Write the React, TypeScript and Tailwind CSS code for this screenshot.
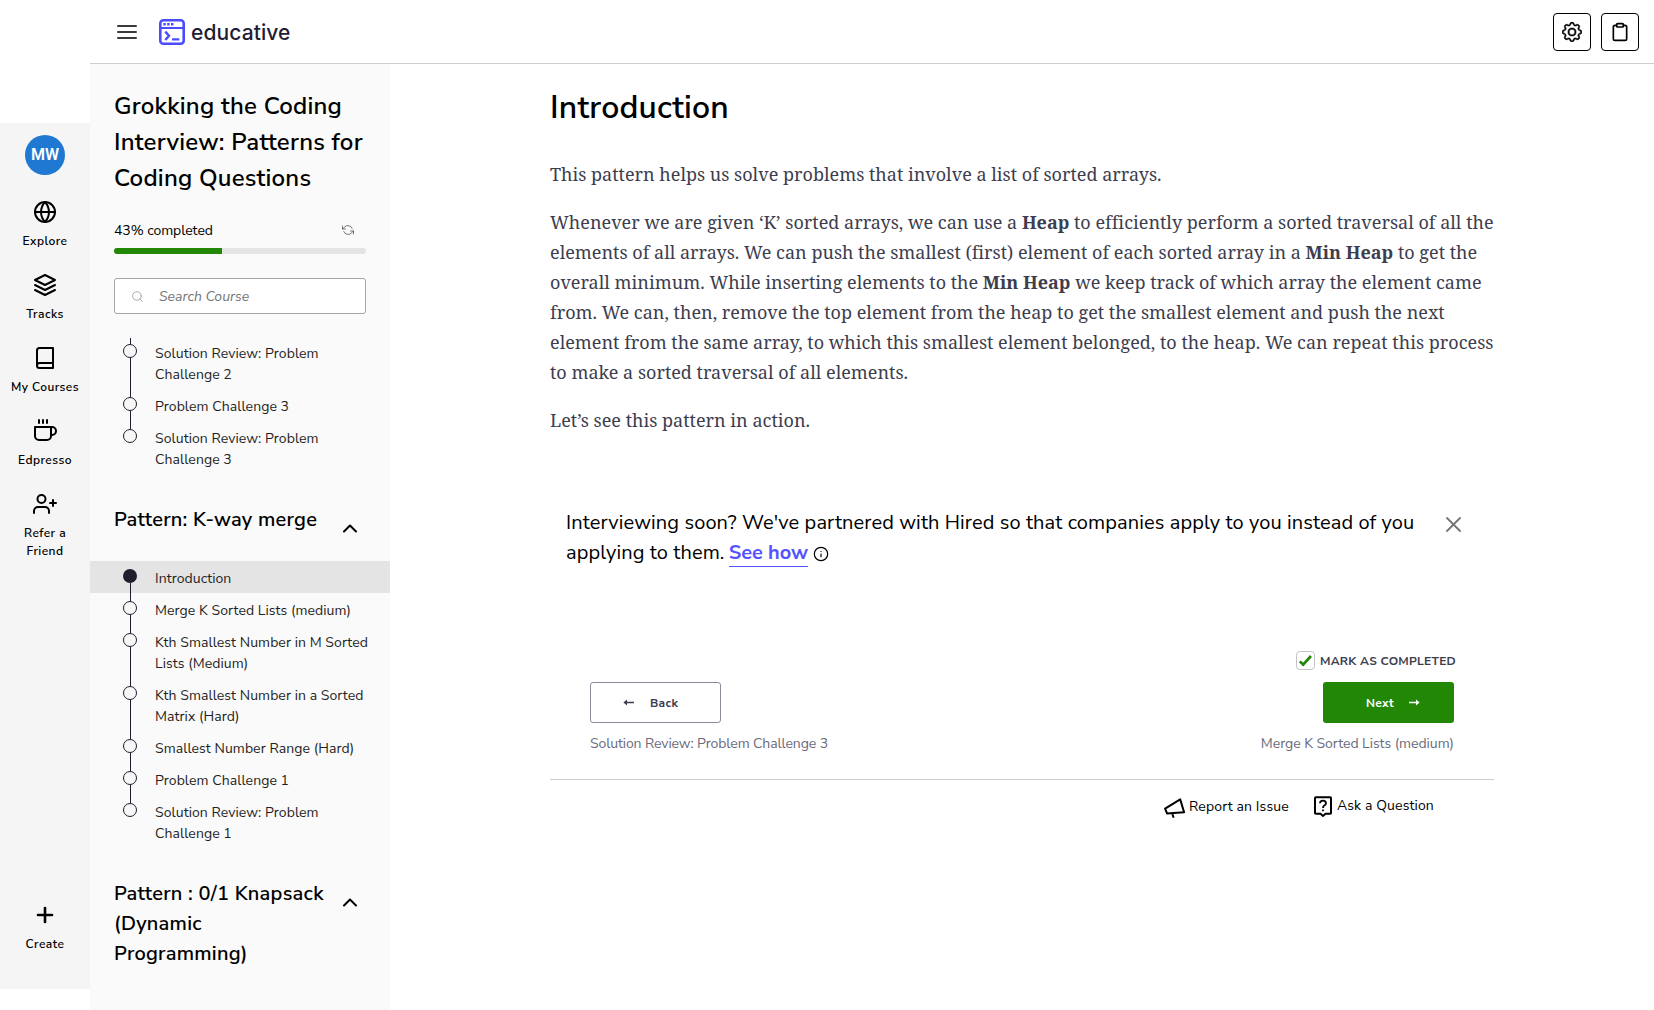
import type { ReactNode } from "react";
import { Clipboard } from "lucide-react";
import { BsGear } from "react-icons/bs";
import { FiBook, FiCoffee, FiGlobe, FiInfo, FiLayers, FiPlus, FiRefreshCw, FiSearch, FiUserPlus } from "react-icons/fi";

const railItems = [
  { label: "Explore", icon: <FiGlobe size={24} /> },
  { label: "Tracks", icon: <FiLayers size={24} /> },
  { label: "My Courses", icon: <FiBook size={24} /> },
  { label: "Edpresso", icon: <FiCoffee size={24} /> },
  { label: "Refer a Friend", icon: <FiUserPlus size={24} /> },
];

const previousLessons = ["Solution Review: Problem Challenge 2", "Problem Challenge 3", "Solution Review: Problem Challenge 3"];

const kWayLessons = [
  "Introduction",
  "Merge K Sorted Lists (medium)",
  "Kth Smallest Number in M Sorted Lists (Medium)",
  "Kth Smallest Number in a Sorted Matrix (Hard)",
  "Smallest Number Range (Hard)",
  "Problem Challenge 1",
  "Solution Review: Problem Challenge 1",
];

function RailItem({ icon, label }: { icon: ReactNode; label: string }) {
  return (
    <div className="flex flex-col items-center gap-2">
      {icon}
      <span className="w-[74px] text-center text-[12px] leading-[18px] font-semibold tracking-[0.45px]">{label}</span>
    </div>
  );
}

function Lesson({ title, active, lineAbove, lineBelow }: { title: string; active?: boolean; lineAbove: boolean; lineBelow: boolean }) {
  return (
    <li className={active ? "flex bg-[#e4e4e4] pl-[33px]" : "flex pl-[33px]"}>
      <div className="flex w-[14px] flex-col items-center">
        <span className={lineAbove ? "ml-px h-2 w-px bg-[#1f1d2e]" : "h-2 w-px"} />
        <span className={active ? "size-[14px] shrink-0 rounded-full bg-[#1f1d2e]" : "size-[14px] shrink-0 rounded-full border border-[#1f1d2e] bg-[#f7f7f8]"} />
        <span className={lineBelow ? "ml-px w-px flex-1 bg-[#1f1d2e]" : "w-px flex-1"} />
      </div>
      <span className="ml-[18px] w-[222px] pt-[7px] pb-1 text-[14px] leading-[21px] tracking-[0.07px] text-[#1f1f24]">{title}</span>
    </li>
  );
}

function LessonList({ lessons, activeIndex, continued }: { lessons: string[]; activeIndex?: number; continued?: boolean }) {
  return (
    <ul>
      {lessons.map((title, i) => (
        <Lesson key={title} title={title} active={i === activeIndex} lineAbove={continued || i > 0} lineBelow={i < lessons.length - 1} />
      ))}
    </ul>
  );
}

function SectionHeading({ title }: { title: string }) {
  return (
    <div className="flex items-start justify-between pt-[31px] pr-[33px] pl-6">
      <h3 className="w-[216px] text-[20px] leading-[30px] font-semibold tracking-[0.24px]">{title}</h3>
      <svg className="mt-[19px]" width="14" height="9" viewBox="0 0 14 9" fill="none" stroke="currentColor" strokeWidth="2" strokeLinecap="round" strokeLinejoin="round">
        <path d="M1 7.5L7 1.5L13 7.5" />
      </svg>
    </div>
  );
}

function Logo() {
  return (
    <svg width="26" height="26" viewBox="0 0 26 26" fill="none" stroke="#4c4cff" strokeWidth="2.6">
      <rect x="1.3" y="1.3" width="23.4" height="23.4" rx="3" />
      <path d="M1 9H25" strokeWidth="2" />
      <path d="M4.4 5.3H6.8M8.2 5.3H10.6M12 5.3H14.4" />
      <path d="M6.3 12.6L10 16.8L6.3 21M13 20.4H20.3" strokeWidth="2.4" />
    </svg>
  );
}

function Arrow({ flip }: { flip?: boolean }) {
  return (
    <svg className={flip ? "rotate-180" : ""} width="11" height="7" viewBox="0 0 11 7">
      <path d="M0 2.8H7V0.4L10.6 3.5L7 6.6V4.2H0Z" fill="currentColor" />
    </svg>
  );
}

export default function App() {
  return (
    <div className="flex h-[1010px] w-[1654px] overflow-hidden bg-white font-['Nunito_Sans','Nunito',sans-serif] text-black">
      <aside className="mt-[123px] flex h-[866px] w-[90px] shrink-0 flex-col items-center bg-[#f5f5f5] pt-3 pb-9">
        <div className="mb-[25px] flex size-10 items-center justify-center rounded-full bg-[#1f78d1] font-['Roboto',sans-serif] text-[16px] font-semibold text-white">MW</div>
        <nav className="flex flex-col gap-[23px]">
          {railItems.map((item) => (
            <RailItem key={item.label} icon={item.icon} label={item.label} />
          ))}
        </nav>
        <div className="mt-auto">
          <RailItem icon={<FiPlus size={24} strokeWidth={2.6} />} label="Create" />
        </div>
      </aside>

      <div className="flex min-w-0 flex-1 flex-col">
        <header className="flex h-16 shrink-0 items-center border-b border-[#cfcfcf] pr-[15px] pl-[27px]">
          <div className="flex w-5 flex-col gap-1">
            <span className="h-[2px] rounded bg-[#3b3b3b]" />
            <span className="h-[2px] rounded bg-[#3b3b3b]" />
            <span className="h-[2px] rounded bg-[#3b3b3b]" />
          </div>
          <div className="ml-[22px] flex items-center gap-[6px]">
            <Logo />
            <span className="pt-[2px] font-['Inter',sans-serif] text-[21px] leading-[26px] font-medium tracking-[0.1px] text-[#1f1d33]">educative</span>
          </div>
          <div className="ml-auto flex gap-[10px]">
            <button className="flex size-[38px] items-center justify-center rounded border border-black"><BsGear size={20} stroke="currentColor" strokeWidth={0.4} /></button>
            <button className="flex size-[38px] items-center justify-center rounded border border-black"><Clipboard size={20} /></button>
          </div>
        </header>

        <div className="flex min-h-0 flex-1">
          <section className="flex w-[300px] shrink-0 flex-col bg-[#fafafa]">
            <div className="px-6 pt-6">
              <h2 className="text-[24px] leading-9 font-semibold tracking-[0.23px]">Grokking the Coding Interview: Patterns for Coding Questions</h2>
              <div className="mt-6 flex items-center justify-between pr-3 text-[14px] leading-[21px]">
                <span className="tracking-[-0.06px]">43% completed</span>
                <FiRefreshCw size={12} strokeWidth={1.4} className="-mt-[2px] -scale-x-100 text-[#444]" />
              </div>
              <div className="mt-[7px] h-[6px] overflow-hidden rounded-[3px] bg-[#e4e4e4]">
                <div className="h-full w-[43%] bg-[#218705]" />
              </div>
              <div className="mt-6 flex h-9 items-center rounded-[3px] border border-[#a5a6ae] bg-white pl-4">
                <FiSearch size={13} strokeWidth={1.5} className="text-[#999]" />
                <span className="ml-[15px] text-[14px] text-[#757575] italic">Search Course</span>
              </div>
            </div>
            <div className="mt-6 min-h-0 flex-1 overflow-hidden">
              <div className="-mt-[2px]">
                <LessonList lessons={previousLessons} continued />
                <SectionHeading title="Pattern: K-way merge" />
                <div className="mt-[26px]">
                  <LessonList lessons={kWayLessons} activeIndex={0} />
                </div>
                <SectionHeading title="Pattern : 0/1 Knapsack (Dynamic Programming)" />
              </div>
            </div>
          </section>

          <main className="ml-40 w-[944px]">
            <h1 className="mt-5 text-[32px] leading-[48px] font-semibold tracking-[0.2px]">Introduction</h1>
            <article className="mt-[27px] flex flex-col gap-[18px] font-['Noto_Serif',serif] text-[18px] leading-[30px] tracking-[0.005px] text-[#3d3d4e]">
              <p>This pattern helps us solve problems that involve a list of sorted arrays.</p>
              <p>
                Whenever we are given ‘K’ sorted arrays, we can use a <b>Heap</b> to efficiently perform a sorted traversal of all the elements of all arrays. We can push the smallest (first) element of each sorted array in a <b>Min Heap</b> to get the overall minimum. While inserting elements to the <b>Min Heap</b> we keep track of which array the element came from. We can, then, remove the top element from the heap to get the smallest element and push the next element from the same array, to which this smallest element belonged, to the heap. We can repeat this process to make a sorted traversal of all elements.
              </p>
              <p>Let’s see this pattern in action.</p>
            </article>

            <div className="mt-[73px] flex items-start justify-between pr-[33px] pl-4">
              <p className="w-[860px] text-[20px] leading-[30px] tracking-[0.115px]">
                Interviewing soon? We've partnered with Hired so that companies apply to you instead of you applying to them.{" "}
                <a className="-ml-px border-b border-[#5553ff] font-bold tracking-[-0.1px] text-[#5553ff]">See how</a>
                <FiInfo size={16} strokeWidth={1.8} className="ml-[5px] inline-block align-[-3px]" />
              </p>
              <svg className="mt-[9px]" width="15" height="15" viewBox="0 0 15 15" stroke="#757575" strokeWidth="1.8" strokeLinecap="round">
                <path d="M1 1L14 14M14 1L1 14" />
              </svg>
            </div>

            <div className="mt-[83px] flex items-end justify-between pr-10 pl-10">
              <div>
                <button className="flex h-[41px] w-[131px] items-center rounded-[3px] border border-[#8b8b9b] pl-8 text-[#3d3d4e]">
                  <Arrow flip />
                  <span className="ml-4 text-[12px] font-bold tracking-[0.3px]">Back</span>
                </button>
                <p className="mt-[10px] text-[14px] leading-[21px] tracking-[-0.1px] text-[#6a6a7c]">Solution Review: Problem Challenge 3</p>
              </div>
              <div className="flex flex-col items-end">
                <div className="-mr-[2px] flex items-center gap-[5px]">
                  <span className="flex size-[19px] items-center justify-center rounded border border-[#c4c4c4]">
                    <svg width="13" height="12" viewBox="0 0 13 12" fill="none" stroke="#218705" strokeWidth="2.8">
                      <path d="M0.8 6.4L4.2 9.6L12 1" />
                    </svg>
                  </span>
                  <span className="text-[12px] leading-[18px] font-bold tracking-[0.26px] text-[#3d3d4e]">MARK AS COMPLETED</span>
                </div>
                <button className="mt-3 flex h-[41px] w-[131px] items-center rounded-[3px] bg-[#218705] pl-[43px] text-white">
                  <span className="text-[12px] font-bold tracking-[0.3px]">Next</span>
                  <span className="ml-[15px]"><Arrow /></span>
                </button>
                <p className="mt-[10px] text-[14px] leading-[21px] tracking-[-0.03px] text-[#6a6a7c]">Merge K Sorted Lists (medium)</p>
              </div>
            </div>

            <div className="mt-[25px] flex items-start border-t border-[#cfcfcf] pt-[15px] pl-[614px] text-[14px] leading-[21px] tracking-[0.14px]">
              <svg className="mt-[3px]" width="22" height="21" viewBox="0 0 22 21" fill="none" stroke="currentColor" strokeWidth="2" strokeLinejoin="round">
                <path d="M1.1 10.7L16.2 1.4L20.1 14.2L3 15.4ZM8.2 15.2L9.6 19.8" />
              </svg>
              <span className="mt-px ml-[3px]">Report an Issue</span>
              <svg className="mt-px ml-[25px]" width="18" height="22" viewBox="0 0 18 22" fill="none" stroke="currentColor" strokeWidth="2">
                <path d="M1.8 1.2H16.2Q17 1.2 17 2V17Q17 17.8 16.2 17.8H11.5L9 20L6.5 17.8H1.8Q1 17.8 1 17V2Q1 1.2 1.8 1.2Z" />
                <path d="M6 7.2Q6 4.6 9 4.6Q12 4.6 12 7.2Q12 8.6 10.3 9.5Q9 10.3 9 12M9 13.4V15.2" strokeWidth="1.8" />
              </svg>
              <span className="ml-[5px]">Ask a Question</span>
            </div>
          </main>
        </div>
      </div>
    </div>
  );
}
